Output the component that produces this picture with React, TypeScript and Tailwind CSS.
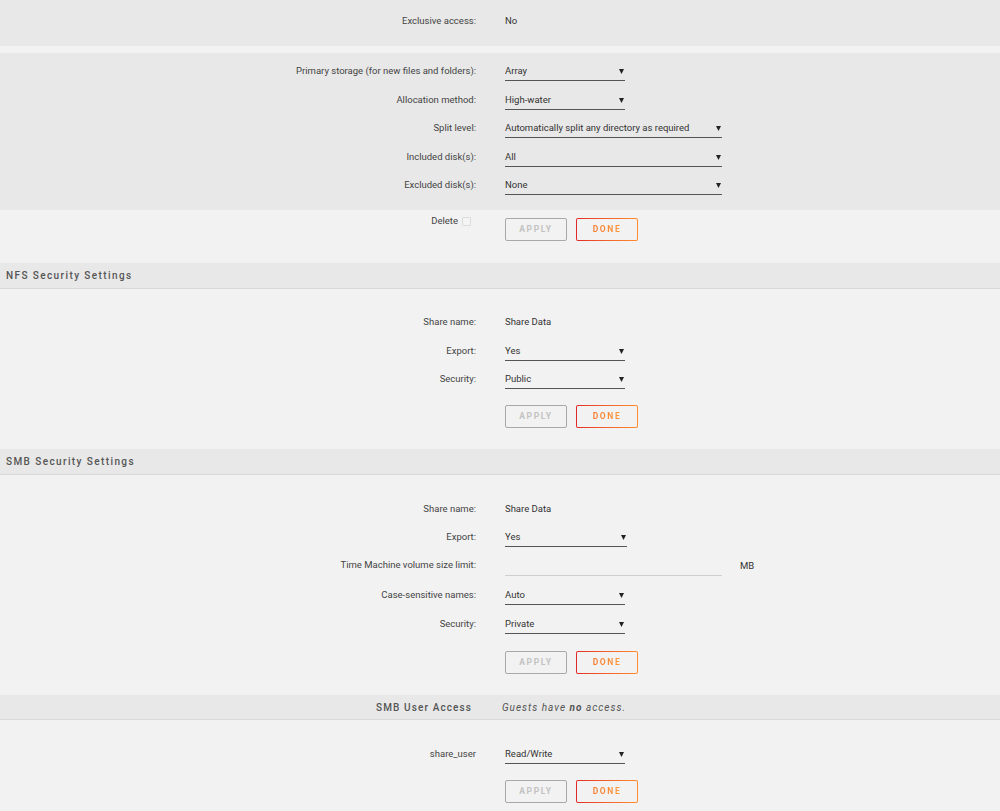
import type { ReactNode } from 'react'

const FONT = "font-['Roboto','Noto_Sans',sans-serif]"

function Arrow() {
  return (
    <svg width="5" height="6" viewBox="0 0 5 6" className="shrink-0">
      <path d="M0 1 L5 1 L2.5 6 Z" fill="#222" />
    </svg>
  )
}

function Select({ value, wide, w }: { value: string; wide?: boolean; w?: string }) {
  return (
    <div
      className={`${w ?? (wide ? 'w-[217px]' : 'w-[120px]')} h-[18px] border-b border-[#555] flex items-start justify-between pr-[1px]`}
    >
      <span className="leading-[16px] text-[#333]">{value}</span>
      <span className="pt-[5px]">
        <Arrow />
      </span>
    </div>
  )
}

function Row({ label, children, h = 'h-[28.5px]' }: { label: ReactNode; children: ReactNode; h?: string }) {
  return (
    <div className={`flex items-start ${h}`}>
      <div className="w-[476px] text-right leading-[16px] text-[#444] shrink-0">{label}</div>
      <div className="ml-[29px]">{children}</div>
    </div>
  )
}

function Buttons() {
  return (
    <div className="flex gap-[9px] ml-[505px]">
      <div className="w-[62px] h-[23px] rounded-[2px] border border-[#a8a8a8] flex items-center justify-center text-[8.5px] font-bold tracking-[1.6px] text-[#c2c2c2]">
        APPLY
      </div>
      <div className="w-[62px] h-[23px] rounded-[2px] p-[1px] bg-gradient-to-r from-[#e22828] to-[#ff8c2f]">
        <div className="w-full h-full rounded-[1px] bg-[#f2f2f2] flex items-center justify-center">
          <span className="text-[8.5px] font-bold tracking-[1.6px] bg-gradient-to-r from-[#f57a30] to-[#ff9a3c] bg-clip-text text-transparent">
            DONE
          </span>
        </div>
      </div>
    </div>
  )
}

function Header({ children }: { children: ReactNode }) {
  return (
    <div className="h-[26px] bg-[#e8e8e8] border-b border-[#d8d8d8] flex items-center px-[6px] text-[10px] font-medium tracking-[1.4px] text-[#555]">
      {children}
    </div>
  )
}

export default function App() {
  return (
    <div className={`${FONT} text-[9.5px] bg-[#f2f2f2] w-[1000px] h-[811px] overflow-hidden`}>
      <div className="h-[46px] bg-[#e8e8e8] pt-[13px]">
        <Row label="Exclusive access:">
          <span className="leading-[16px] text-[#333]">No</span>
        </Row>
      </div>
      <div className="h-[7px]" />
      <div className="h-[157px] bg-[#e8e8e8] pt-[10px]">
        <Row label="Primary storage (for new files and folders):">
          <Select value="Array" />
        </Row>
        <Row label="Allocation method:">
          <Select value="High-water" />
        </Row>
        <Row label="Split level:">
          <Select value="Automatically split any directory as required" wide />
        </Row>
        <Row label="Included disk(s):">
          <Select value="All" wide />
        </Row>
        <Row label="Excluded disk(s):">
          <Select value="None" wide />
        </Row>
      </div>
      <div className="h-[53px] relative">
        <div className="absolute left-0 top-[3px] w-[476px] flex justify-end items-center gap-[4px] pr-[5px] text-[#444]">
          <span className="leading-[16px]">Delete</span>
          <span className="w-[9px] h-[9px] border border-[#dcdcdc] rounded-[1px] bg-[#f4f4f4]" />
        </div>
        <div className="pt-[8px]">
          <Buttons />
        </div>
      </div>

      <Header>NFS Security Settings</Header>
      <div className="h-[160px] pt-[25px]">
        <Row label="Share name:">
          <span className="leading-[16px] text-[#333]">Share Data</span>
        </Row>
        <Row label="Export:">
          <Select value="Yes" />
        </Row>
        <Row label="Security:">
          <Select value="Public" />
        </Row>
        <div className="pt-[5px]">
          <Buttons />
        </div>
      </div>

      <Header>SMB Security Settings</Header>
      <div className="h-[220px] pt-[26px]">
        <Row label="Share name:" h="h-[28px]">
          <span className="leading-[16px] text-[#333]">Share Data</span>
        </Row>
        <Row label="Export:" h="h-[28px]">
          <Select value="Yes" w="w-[122px]" />
        </Row>
        <Row label="Time Machine volume size limit:" h="h-[30px]">
          <div className="flex items-start">
            <div className="w-[217px] h-[19px] border-b border-[#cfcfcf]" />
            <span className="ml-[18px] leading-[18px] text-[#333]">MB</span>
          </div>
        </Row>
        <Row label="Case-sensitive names:" h="h-[29px]">
          <Select value="Auto" />
        </Row>
        <Row label="Security:" h="h-[28px]">
          <Select value="Private" />
        </Row>
        <div className="pt-[7px]">
          <Buttons />
        </div>
      </div>

      <div className="h-[25px] bg-[#e8e8e8] border-b border-[#d8d8d8] flex items-center text-[10px] tracking-[1.1px] text-[#555]">
        <div className="w-[472px] text-right font-medium">SMB User Access</div>
        <div className="ml-[30px] italic tracking-[1px]">
          Guests have <b className="font-bold">no</b> access.
        </div>
      </div>
      <div className="pt-[26px]">
        <Row label="share_user">
          <Select value="Read/Write" />
        </Row>
        <div className="pt-[5px]">
          <Buttons />
        </div>
      </div>
    </div>
  )
}
